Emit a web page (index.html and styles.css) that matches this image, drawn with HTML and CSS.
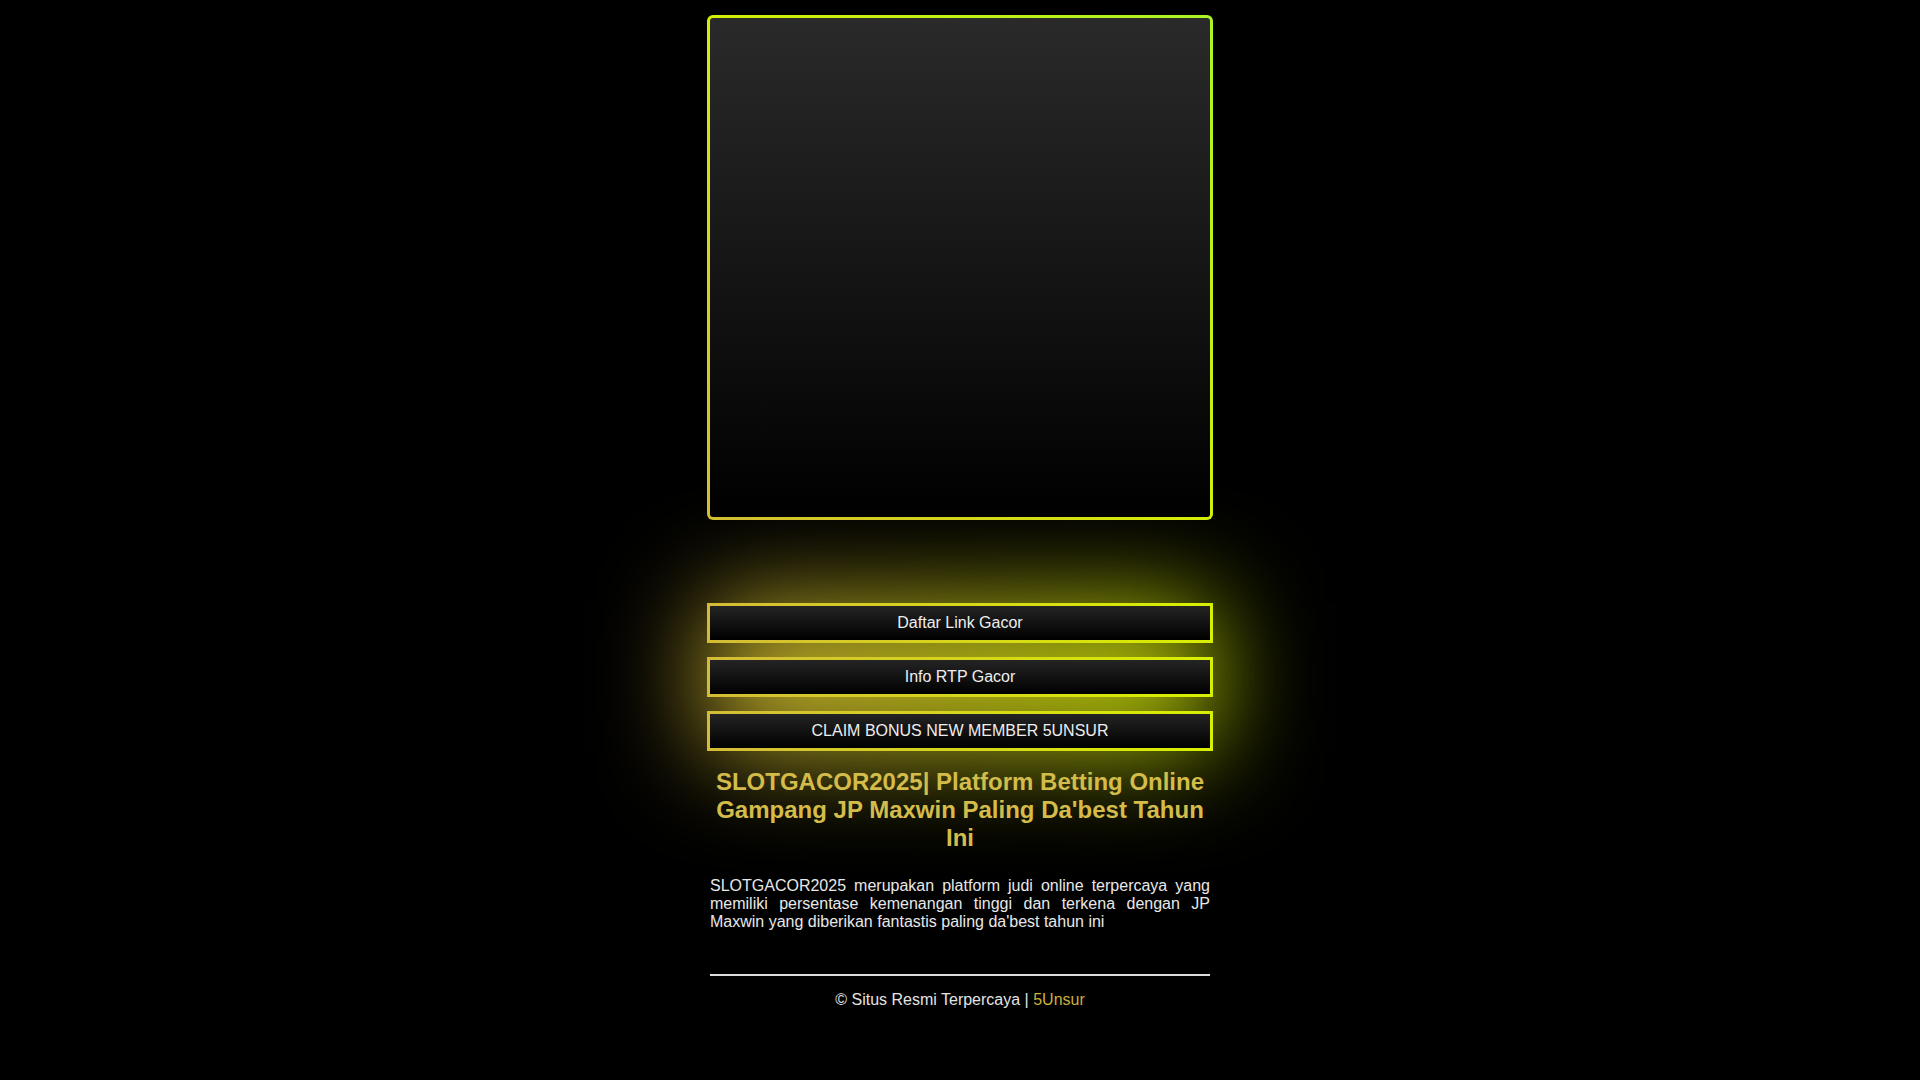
FILE: index.html
```html
<!DOCTYPE html>
<html lang="id">
<head>
<meta charset="utf-8">
<title>SLOTGACOR2025</title>
<link rel="stylesheet" href="styles.css">
</head>
<body>
<div class="wrap">
  <div class="banner"></div>
  <nav class="links">
    <a class="btn" href="#">Daftar Link Gacor</a>
    <a class="btn" href="#">Info RTP Gacor</a>
    <a class="btn" href="#">CLAIM BONUS NEW MEMBER 5UNSUR</a>
  </nav>
  <section class="content">
    <h1 class="title">SLOTGACOR2025| Platform Betting Online Gampang JP Maxwin Paling Da'best Tahun Ini</h1>
    <p class="desc">SLOTGACOR2025 merupakan platform judi online terpercaya yang memiliki persentase kemenangan tinggi dan terkena dengan JP Maxwin yang diberikan fantastis paling da'best tahun ini</p>
    <hr class="rule">
    <footer class="foot">© Situs Resmi Terpercaya | <span class="brand">5Unsur</span></footer>
  </section>
</div>
</body>
</html>
```

FILE: styles.css
```css
html {
  background: #000;
}
body {
  margin: 0;
  padding: 0;
  font-family: "Liberation Sans", Arial, sans-serif;
  color: #e8e8e8;
}
.wrap {
  width: 506px;
  margin: 0 auto;
  padding-top: 15px;
}
.banner {
  position: relative;
  z-index: 1;
  box-sizing: border-box;
  height: 505px;
  border: 3px solid transparent;
  border-radius: 6px;
  background:
    linear-gradient(180deg, #2a2a2a 0%, #151515 50%, #000 100%) padding-box,
    linear-gradient(45deg, #d4bd32 0%, #d4ee06 50%, #acf426 100%) border-box;
}
.links {
  position: relative;
  isolation: isolate;
  display: flex;
  flex-direction: column;
  gap: 14px;
  margin-top: 83px;
}
.links::before {
  content: "";
  position: absolute;
  inset: 0;
  z-index: -1;
  background: linear-gradient(90deg, rgba(212, 184, 52, 0.9), rgba(196, 222, 0, 0.9));
  filter: blur(52px);
}
.btn {
  box-sizing: border-box;
  height: 40px;
  display: flex;
  align-items: center;
  justify-content: center;
  border: 3px solid transparent;
  background:
    linear-gradient(180deg, #242424 0%, #000 100%) padding-box,
    linear-gradient(90deg, #d4bc36 0%, #d8f000 100%) border-box;
  color: #eeeeee;
  font-size: 16px;
  text-decoration: none;
}
.content {
  position: relative;
  padding: 0 3px;
}
.title {
  margin: 17px 0 25px;
  font-size: 24px;
  font-weight: bold;
  line-height: normal;
  text-align: center;
  color: #d4bc4a;
}
.desc {
  margin: 0;
  font-size: 16px;
  line-height: normal;
  text-align: justify;
  color: #e8e8e8;
}
.rule {
  margin: 43px 0 0;
  height: 0;
  border: 0;
  border-top: 2px solid #dcdcdc;
}
.foot {
  margin-top: 15px;
  font-size: 16px;
  line-height: normal;
  text-align: center;
  color: #e4e4e4;
}
.brand {
  color: #ccb03a;
}
```
